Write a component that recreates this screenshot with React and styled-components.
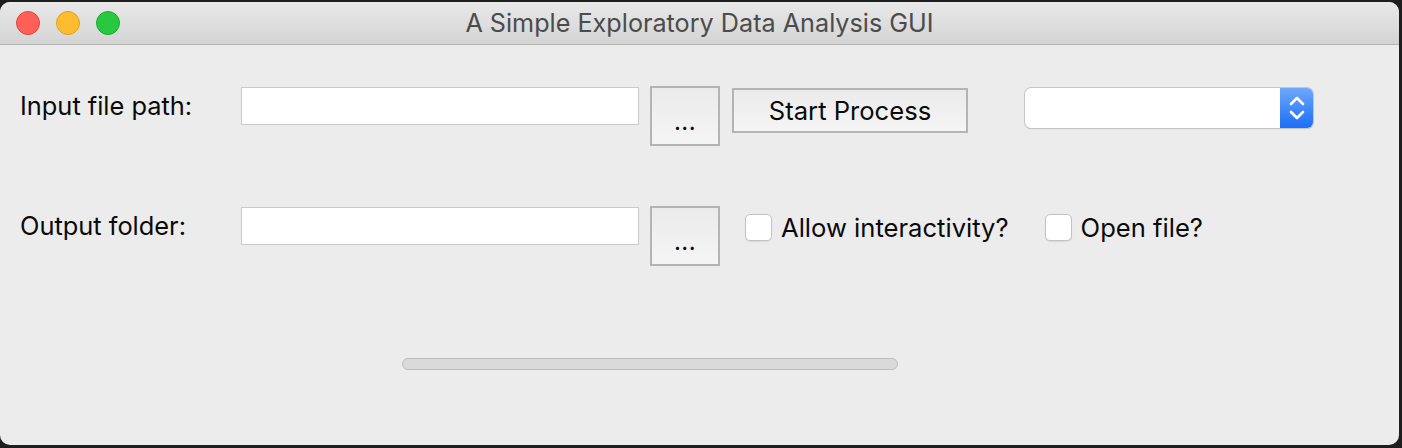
import React from 'react';
import styled, { createGlobalStyle } from 'styled-components';

const Global = createGlobalStyle`
  html, body {
    margin: 0;
    padding: 0;
    background: #1e1e1e;
    overflow: hidden;
  }
  * { box-sizing: border-box; }
`;

const Window = styled.div`
  margin-top: 2px;
  width: 1399px;
  height: 443px;
  border-radius: 10px;
  overflow: hidden;
  background: #ececec;
  font-family: Inter, "Liberation Sans", sans-serif;
  color: #0a0a0a;
`;

const TitleBar = styled.div`
  height: 43px;
  display: grid;
  grid-template-columns: 1fr auto 1fr;
  align-items: center;
  background: linear-gradient(#e9e9e9, #d4d4d4);
  border-bottom: 1px solid #b4b4b4;
`;

const Lights = styled.div`
  display: flex;
  gap: 16px;
  padding-left: 16px;
`;

const Light = styled.span`
  width: 24px;
  height: 24px;
  border-radius: 50%;
  background: ${p => p.$c};
  border: 1px solid ${p => p.$b};
`;

const Title = styled.div`
  font-size: 25.2px;
  color: #4b4b4b;
`;

const Content = styled.div`
  padding: 41px 0 0 20px;
`;

const Row = styled.div`
  display: flex;
  align-items: flex-start;
  height: 60px;
  margin-bottom: ${p => p.$gap || 0}px;
`;

const Label = styled.div`
  width: 221px;
  font-size: 25.4px;
  line-height: 38px;
  margin-top: ${p => p.$top}px;
`;

const Field = styled.div`
  width: 398px;
  height: 38px;
  margin-top: ${p => p.$top}px;
  background: #fff;
  border: 1px solid #c9c9c9;
`;

const Btn = styled.div`
  display: flex;
  align-items: center;
  justify-content: center;
  width: ${p => p.$w}px;
  height: ${p => p.$h}px;
  margin-left: ${p => p.$ml}px;
  margin-top: ${p => p.$top || 0}px;
  border: 2px solid #b4b4b4;
  background: linear-gradient(#ebebeb, #f5f5f5);
  font-size: 25.6px;
  color: #0a0a0a;
`;

const Dots = styled.span`
  font-size: 24px;
  padding-top: 10px;
  letter-spacing: 0.5px;
`;

const Select = styled.div`
  display: flex;
  width: 288px;
  height: 40px;
  margin: 2px 0 0 57px;
  border-radius: 6px;
  overflow: hidden;
  background: #fff;
  box-shadow: 0 0 0 1px #c6c6c6, 0 1px 1px rgba(0,0,0,0.25);
`;

const SelectBody = styled.div`
  flex: 1;
`;

const Stepper = styled.div`
  width: 33px;
  display: flex;
  align-items: center;
  justify-content: center;
  background: linear-gradient(#6ea8fb, #1a6ef8);
`;

const Check = styled.label`
  display: flex;
  align-items: center;
  gap: 9px;
  margin-left: ${p => p.$ml}px;
  margin-top: 6px;
  font-size: 25.6px;
`;

const Box = styled.span`
  width: 27px;
  height: 27px;
  border-radius: 5px;
  background: #fff;
  border: 1px solid #c2c2c2;
  box-shadow: 0 1px 1px rgba(0,0,0,0.08);
`;

const Progress = styled.div`
  width: 496px;
  height: 12px;
  margin-left: 382px;
  border-radius: 6px;
  background: #dadada;
  border: 1px solid #bebebe;
`;

function Chevrons() {
  return (
    <svg width="16" height="28" viewBox="0 0 16 28">
      <path d="M2 10 L8 4 L14 10" fill="none" stroke="#fff" strokeWidth="2.6" strokeLinecap="round" strokeLinejoin="round" />
      <path d="M2 18 L8 24 L14 18" fill="none" stroke="#fff" strokeWidth="2.6" strokeLinecap="round" strokeLinejoin="round" />
    </svg>
  );
}

export default function App() {
  return (
    <>
      <Global />
      <Window>
        <TitleBar>
          <Lights>
            <Light $c="#fe5f57" $b="#e0443e" />
            <Light $c="#febc2e" $b="#dea123" />
            <Light $c="#28c840" $b="#1aab29" />
          </Lights>
          <Title>A Simple Exploratory Data Analysis GUI</Title>
          <div />
        </TitleBar>
        <Content>
          <Row $gap={60}>
            <Label $top={1}>Input file path:</Label>
            <Field $top={1} />
            <Btn $w={70} $h={60} $ml={11}><Dots>...</Dots></Btn>
            <Btn $w={236} $h={45} $ml={12} $top={2}>Start Process</Btn>
            <Select>
              <SelectBody />
              <Stepper><Chevrons /></Stepper>
            </Select>
          </Row>
          <Row $gap={92}>
            <Label $top={1}>Output folder:</Label>
            <Field $top={1} />
            <Btn $w={70} $h={60} $ml={11}><Dots>...</Dots></Btn>
            <Check $ml={25}><Box />Allow interactivity?</Check>
            <Check $ml={36}><Box />Open file?</Check>
          </Row>
          <Progress />
        </Content>
      </Window>
    </>
  );
}
